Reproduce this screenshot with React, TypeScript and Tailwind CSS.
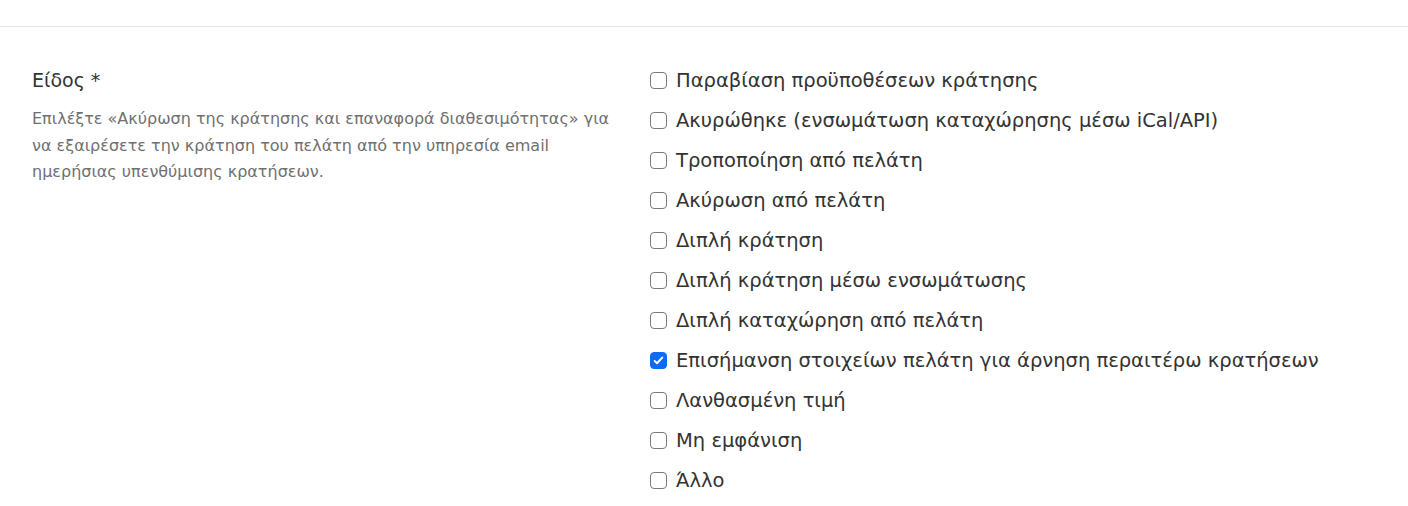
import React, { useState } from 'react';

const OPTIONS = [
  'Παραβίαση προϋποθέσεων κράτησης',
  'Ακυρώθηκε (ενσωμάτωση καταχώρησης μέσω iCal/API)',
  'Τροποποίηση από πελάτη',
  'Ακύρωση από πελάτη',
  'Διπλή κράτηση',
  'Διπλή κράτηση μέσω ενσωμάτωσης',
  'Διπλή καταχώρηση από πελάτη',
  'Επισήμανση στοιχείων πελάτη για άρνηση περαιτέρω κρατήσεων',
  'Λανθασμένη τιμή',
  'Μη εμφάνιση',
  'Άλλο',
];

const CheckBox = ({ checked }: { checked: boolean }) => (
  <span
    className={`flex h-[17px] w-[17px] shrink-0 items-center justify-center rounded-[4px] border ${
      checked ? 'border-[#0a6cf5] bg-[#0a6cf5]' : 'border-[#7a7a7a] bg-white'
    }`}
  >
    {checked && (
      <svg viewBox="0 0 16 16" className="h-[13px] w-[13px]">
        <path d="M3.2 8.4l3 3 6.4-7" fill="none" stroke="white" strokeWidth="2.4" strokeLinecap="round" strokeLinejoin="round" />
      </svg>
    )}
  </span>
);

export default function App() {
  const [selected, setSelected] = useState<number[]>([7]);

  const toggle = (i: number) =>
    setSelected((s) => (s.includes(i) ? s.filter((x) => x !== i) : [...s, i]));

  return (
    <div className="min-h-[506px] bg-white font-['DejaVu_Sans','Liberation_Sans',sans-serif] text-[#333]">
      <div className="h-[26px]" />
      <div className="border-t border-[#e6e6e6]">
        <div className="grid grid-cols-[586px_1fr] gap-8 px-8 pt-[33px]">
          {/* Label + help text */}
          <div>
            <div className="pt-[6px] text-[19px] leading-[28px] text-[#333]">Είδος *</div>
            <p className="mt-[12px] text-[16px] leading-[26.5px] text-[#707070]">
              Επιλέξτε «Ακύρωση της κράτησης και επαναφορά διαθεσιμότητας» για να εξαιρέσετε την
              κράτηση του πελάτη από την υπηρεσία email ημερήσιας υπενθύμισης κρατήσεων.
            </p>
          </div>

          {/* Options */}
          <div className="flex flex-col">
            {OPTIONS.map((opt, i) => (
              <label
                key={opt}
                onClick={() => toggle(i)}
                className="flex h-10 cursor-pointer items-center gap-[9px] text-[19.5px]"
              >
                <CheckBox checked={selected.includes(i)} />
                <span className="pt-[2px]">{opt}</span>
              </label>
            ))}
          </div>
        </div>
      </div>
    </div>
  );
}
